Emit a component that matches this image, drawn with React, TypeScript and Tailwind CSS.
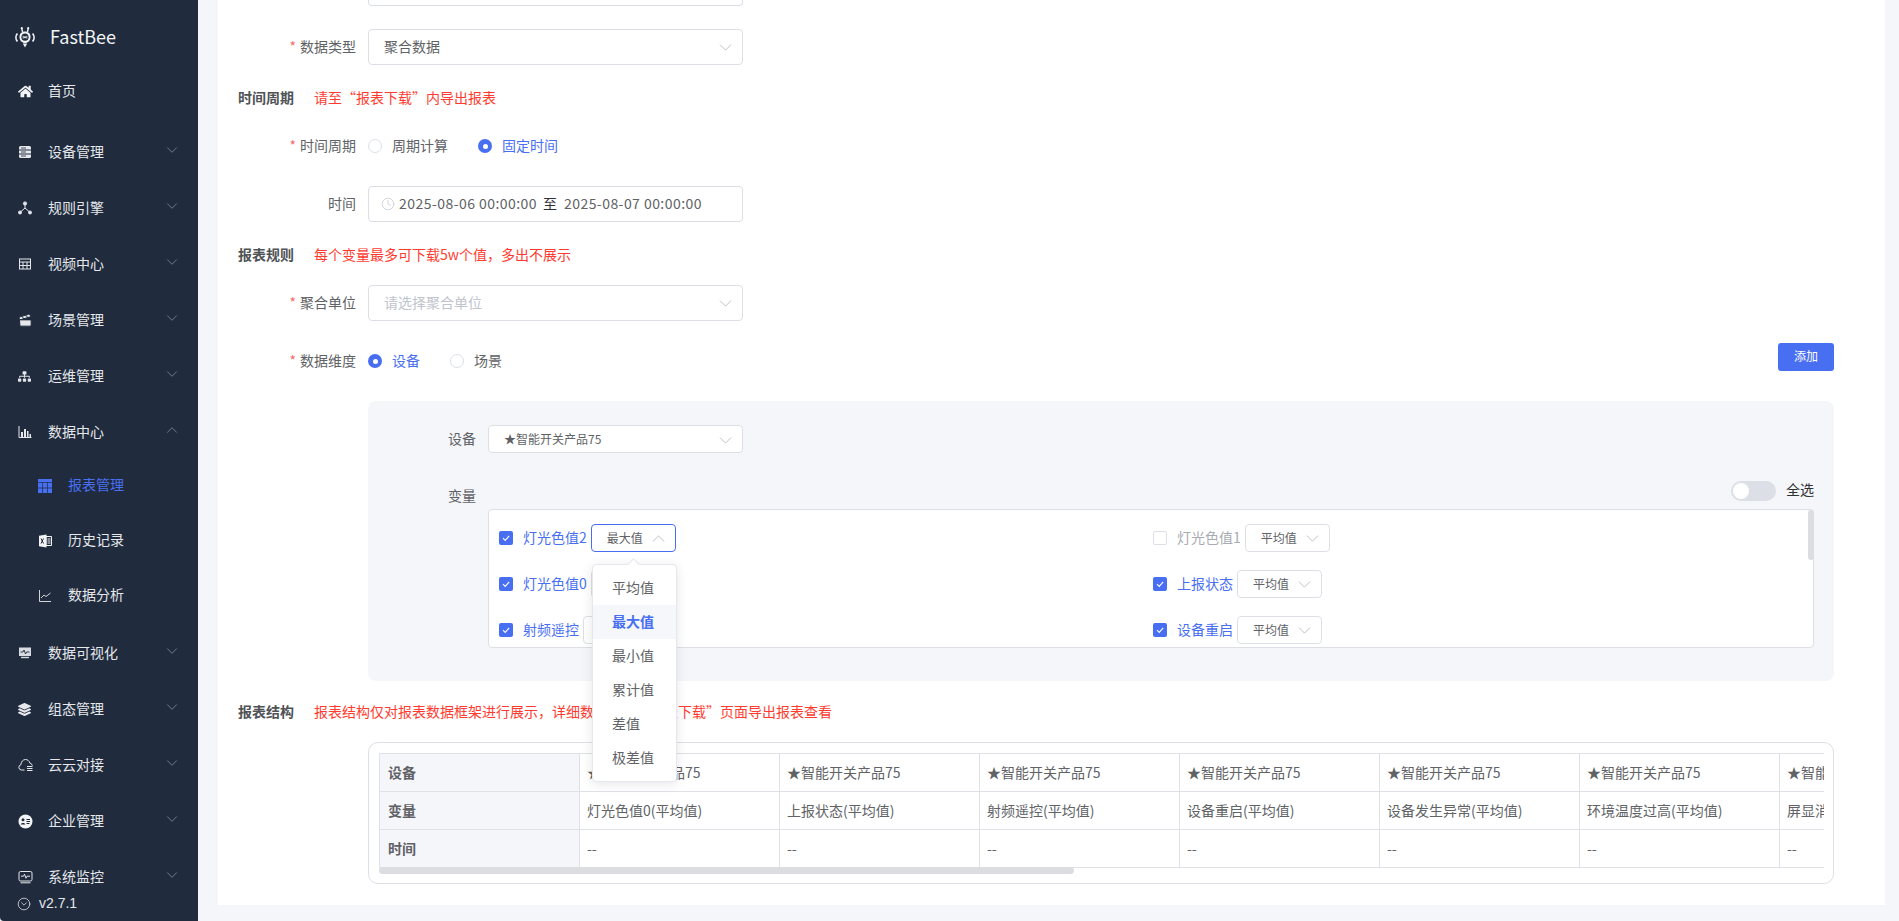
import type { ReactNode } from 'react';
import { ChevronDown, ChevronUp, CircleChevronDown, Clock, Clapperboard } from 'lucide-react';
import { FaHome, FaLayerGroup, FaSitemap } from 'react-icons/fa';

function DeviceIcon() {
  return (
    <svg width="14" height="14" viewBox="0 0 14 14" fill="none">
      <rect x="1" y="1" width="12" height="12" rx="1.5" fill="#e5e7eb" />
      <path d="M1 5h12M1 9h12" stroke="#202c3e" strokeWidth="1" />
      <path d="M3 3h5M3 7h5M3 11h5" stroke="#202c3e" strokeWidth="0.8" />
    </svg>
  );
}

function RuleIcon() {
  return (
    <svg width="14" height="14" viewBox="0 0 14 14" fill="none" stroke="#e5e7eb">
      <path d="M7 3v4M7 7l-4.5 4M7 7l4.5 4" strokeWidth="1" />
      <circle cx="7" cy="2.5" r="1.6" fill="#e5e7eb" />
      <circle cx="2" cy="11.5" r="1.5" fill="#e5e7eb" />
      <circle cx="12" cy="11.5" r="1.5" fill="#e5e7eb" />
    </svg>
  );
}

function VideoIcon() {
  return (
    <svg width="14" height="14" viewBox="0 0 14 14" fill="none" stroke="#e5e7eb" strokeWidth="1">
      <rect x="1.5" y="2" width="11" height="10" />
      <path d="M1.5 5h11M1.5 8.5h11M5 5v7M9 5v7" />
    </svg>
  );
}

function BarsIcon() {
  return (
    <svg width="14" height="14" viewBox="0 0 14 14" fill="none">
      <path d="M1 1v11.5h12.500" stroke="#e5e7eb" strokeWidth="1" />
      <path d="M3 7h2v5H3zM6 4h2v8H6zM9 6h1.500v6H9zM11.500 9H13v3h-1.500z" fill="#e5e7eb" />
    </svg>
  );
}

function ReportIcon() {
  return (
    <svg width="14" height="14" viewBox="0 0 14 14">
      <rect width="14" height="14" fill="#486ff2" />
      <path d="M0 3.500h14M0 9h14M4.500 3.500V14M9.500 3.500V14" stroke="#202c3e" strokeWidth="0.7" />
    </svg>
  );
}

function LineChartIcon() {
  return (
    <svg width="14" height="14" viewBox="0 0 14 14" fill="none" stroke="#e5e7eb" strokeWidth="0.9">
      <path d="M1.500 1v11.500H13" />
      <path d="M3 9l3-3 2 1.500L12.500 4" />
    </svg>
  );
}

function ExcelIcon() {
  return (
    <svg width="14" height="14" viewBox="0 0 14 14">
      <path d="M8 2.500h5.500v9H8z" fill="none" stroke="#f3f4f6" strokeWidth="1" />
      <path d="M9.500 5h3M9.500 7h3M9.500 9h3" stroke="#f3f4f6" strokeWidth="1" />
      <path d="M1 1.800 8.500 0.500v13L1 12.200z" fill="#f3f4f6" />
      <path d="M3 4.500l2.500 5M5.500 4.500 3 9.500" stroke="#202c3e" strokeWidth="1" />
    </svg>
  );
}

function ScreenPulseIcon() {
  return (
    <svg width="14" height="14" viewBox="0 0 14 14" fill="none">
      <path d="M1 1.500h12v8.500H1z" fill="#d8dbe0" />
      <path d="M2.500 6h2.500l1-2 1.500 4 1-2H11.500" stroke="#202c3e" strokeWidth="0.9" />
      <path d="M3 11.500h8" stroke="#d8dbe0" strokeWidth="1.400" />
    </svg>
  );
}

function CloudIcon() {
  return (
    <svg width="15" height="14" viewBox="0 0 15 14" fill="none" stroke="#e5e7eb" strokeWidth="1">
      <path d="M6.500 12H3.300a2.700 2.700 0 0 1-.4-5.300C3 3.800 5 1.500 7.500 1.500c2.200 0 3.800 1.500 4.300 3.500a3.200 3.200 0 0 1 2.500 2.500" />
      <path d="M9 8.500h5.500M9 10.500h5.500M9 12.500h5.500" />
    </svg>
  );
}

function CompanyIcon() {
  return (
    <svg width="15" height="15" viewBox="0 0 15 15">
      <circle cx="7.500" cy="7.500" r="7" fill="#f3f4f6" />
      <circle cx="5" cy="5.800" r="1.500" fill="#202c3e" />
      <path d="M2.700 10.500c.2-2 4.400-2 4.600 0z" fill="#202c3e" />
      <path d="M8.500 5.500h3.500M8.500 7.500h3.500M8.500 9.500h3" stroke="#202c3e" strokeWidth="1" />
    </svg>
  );
}

function MonitorIcon() {
  return (
    <svg width="15" height="14" viewBox="0 0 15 14" fill="none" stroke="#e5e7eb" strokeWidth="1">
      <rect x="1" y="1.500" width="13" height="9.500" rx="1.500" />
      <path d="M3 6.200h2.500l1-2 1.500 4 1-2h3" />
      <path d="M2.500 12.800h10" />
    </svg>
  );
}

function BeeLogo() {
  return (
    <svg width="20" height="21" viewBox="0 0 20 21" fill="none">
      <path d="M7.500 5 6.800 1.500M12.500 5l.7-3.500" stroke="#f3f4f6" strokeWidth="1.400" />
      <circle cx="6.800" cy="1.200" r="1.100" fill="#f3f4f6" />
      <circle cx="13.200" cy="1.200" r="1.100" fill="#f3f4f6" />
      <path d="M10 4.500c3.500 0 5.500 2.300 5.500 5.500 0 3.800-2.600 6-5.500 6s-5.500-2.200-5.500-6c0-3.200 2-5.500 5.500-5.500z" fill="#f3f4f6" />
      <circle cx="10" cy="10.200" r="3.600" fill="#202c3e" />
      <path d="M8.200 8.800v2.800M11.800 8.800v2.800" stroke="#f3f4f6" strokeWidth="0.900" />
      <circle cx="10" cy="10.200" r="1" fill="#f3f4f6" />
      <path d="M2.400 6.500c-1.900 2.300-1.900 5.700 0 8M17.600 6.500c1.900 2.300 1.900 5.700 0 8" stroke="#f3f4f6" strokeWidth="1.700" />
      <path d="M7.800 16.500h4.400L10 20.500z" fill="#f3f4f6" />
    </svg>
  );
}

type MenuEntry = {
  label: string;
  icon: ReactNode;
  arrow?: 'down' | 'up';
};

const menuTop: MenuEntry[] = [
  { label: '设备管理', icon: <DeviceIcon />, arrow: 'down' },
  { label: '规则引擎', icon: <RuleIcon />, arrow: 'down' },
  { label: '视频中心', icon: <VideoIcon />, arrow: 'down' },
  { label: '场景管理', icon: <Clapperboard size={15} color="#202c3e" fill="#e5e7eb" strokeWidth={1.5} />, arrow: 'down' },
  { label: '运维管理', icon: <FaSitemap size={13} color="#e5e7eb" />, arrow: 'down' },
  { label: '数据中心', icon: <BarsIcon />, arrow: 'up' },
];

const menuBottom: MenuEntry[] = [
  { label: '数据可视化', icon: <ScreenPulseIcon />, arrow: 'down' },
  { label: '组态管理', icon: <FaLayerGroup size={13} color="#e5e7eb" />, arrow: 'down' },
  { label: '云云对接', icon: <CloudIcon />, arrow: 'down' },
  { label: '企业管理', icon: <CompanyIcon />, arrow: 'down' },
  { label: '系统监控', icon: <MonitorIcon />, arrow: 'down' },
];

function MenuRow({ label, icon, arrow }: MenuEntry) {
  return (
    <div className="flex h-[56px] items-center pl-[18px] pr-[17px] text-[14px] text-[#e5e7eb]">
      <span className="flex w-[30px] shrink-0 items-center">{icon}</span>
      <span className="flex-1 pb-[2px]">{label}</span>
      {arrow === 'down' && <ChevronDown size={18} strokeWidth={1} color="#8a919c" className="mb-[5px]" />}
      {arrow === 'up' && <ChevronUp size={18} strokeWidth={1} color="#8a919c" className="mb-[4px]" />}
    </div>
  );
}

function SubRow({ label, icon, active }: { label: string; icon: ReactNode; active?: boolean }) {
  return (
    <div className={`flex h-[55px] items-center pl-[38px] text-[14px] ${active ? 'text-[#486ff2]' : 'text-[#e5e7eb]'}`}>
      <span className="flex w-[30px] shrink-0 items-center">{icon}</span>
      <span className="pb-[2px]">{label}</span>
    </div>
  );
}

function Sidebar() {
  return (
    <aside className="relative h-full w-[198px] shrink-0 overflow-hidden rounded-bl-[4px] bg-[#202c3e]">
      <div className="flex h-[63px] items-center pl-[15px] pt-[12px]">
        <BeeLogo />
        <span className="ml-[15px] pb-[2px] text-[18px] text-[#f3f4f6]">FastBee</span>
      </div>
      <div className="flex h-[61px] items-start">
        <div className="w-full">
          <MenuRow label="首页" icon={<FaHome size={15} color="#f3f4f6" />} />
        </div>
      </div>
      {menuTop.map((entry) => (
        <MenuRow key={entry.label} {...entry} />
      ))}
      <div className="-mt-[2px] mb-[2px]">
        <SubRow label="报表管理" icon={<ReportIcon />} active />
        <SubRow label="历史记录" icon={<ExcelIcon />} />
        <SubRow label="数据分析" icon={<LineChartIcon />} />
      </div>
      {menuBottom.map((entry) => (
        <MenuRow key={entry.label} {...entry} />
      ))}
      <div className="absolute bottom-[7px] left-[17px] flex items-center gap-[8px] text-[14px] font-medium text-[#e5e7eb]">
        <CircleChevronDown size={14} strokeWidth={1.3} />
        <span className="font-['Liberation_Sans',sans-serif]">v2.7.1</span>
      </div>
    </aside>
  );
}

function FormLabel({ text, required }: { text: string; required?: boolean }) {
  return (
    <div className="mr-[12px] w-[118px] shrink-0 pb-[2px] text-right text-[14px] text-[#606266]">
      {required && <span className="mr-[4px] text-[#f56c6c]">*</span>}
      {text}
    </div>
  );
}

function Radio({ label, checked, className }: { label: string; checked?: boolean; className?: string }) {
  return (
    <div className={`flex items-center ${className ?? ''}`}>
      {checked ? (
        <span className="flex h-[14px] w-[14px] items-center justify-center rounded-full bg-[#486ff2]">
          <span className="h-[5px] w-[5px] rounded-full bg-white" />
        </span>
      ) : (
        <span className="h-[14px] w-[14px] rounded-full border border-[#dcdfe6] bg-white" />
      )}
      <span className={`ml-[10px] pb-[2px] text-[14px] ${checked ? 'text-[#486ff2]' : 'text-[#606266]'}`}>{label}</span>
    </div>
  );
}

function BigSelect({ value, placeholder }: { value?: string; placeholder?: string }) {
  return (
    <div className="flex h-[36px] w-[375px] items-center justify-between rounded-[4px] border border-[#dcdfe6] bg-white pl-[15px] pr-[6px] text-[14px]">
      <span className={`pb-[2px] ${value ? 'text-[#606266]' : 'text-[#c0c4cc]'}`}>{value ?? placeholder}</span>
      <ChevronDown size={21} strokeWidth={1} color="#b4b8bf" />
    </div>
  );
}

function SectionTitle({ title, hint }: { title: string; hint: string }) {
  return (
    <div className="flex h-[20px] items-center pb-[2px] text-[14px]">
      <span className="w-[76px] shrink-0 font-bold text-[#505356]">{title}</span>
      <span className="text-[#ff3b30]">{hint}</span>
    </div>
  );
}

function Check({ checked }: { checked: boolean }) {
  if (!checked) {
    return <span className="h-[14px] w-[14px] shrink-0 rounded-[2px] border border-[#dcdfe6] bg-white" />;
  }
  return (
    <span className="flex h-[14px] w-[14px] shrink-0 items-center justify-center rounded-[2px] bg-[#486ff2]">
      <svg width="10" height="10" viewBox="0 0 10 10" fill="none" stroke="#fff" strokeWidth="1.100">
        <path d="M2 5.200 4.200 7.400 8.200 2.800" />
      </svg>
    </span>
  );
}

function MiniSelect({ value, open }: { value: string; open?: boolean }) {
  return (
    <div
      className={`ml-[4px] flex h-[28px] w-[85px] shrink-0 items-center justify-between rounded-[4px] border bg-white pl-[15px] pr-[6px] text-[12px] text-[#606266] ${open ? 'border-[#486ff2]' : 'border-[#dcdfe6]'}`}
    >
      <span className="pb-[1px]">{value}</span>
      {open ? <ChevronUp size={21} strokeWidth={1} color="#b4b8bf" /> : <ChevronDown size={21} strokeWidth={1} color="#b4b8bf" />}
    </div>
  );
}

type Variable = {
  name: string;
  checked: boolean;
  open?: boolean;
  value: string;
};

const variables: Variable[] = [
  { name: '灯光色值2', checked: true, open: true, value: '最大值' },
  { name: '灯光色值1', checked: false, value: '平均值' },
  { name: '灯光色值0', checked: true, value: '平均值' },
  { name: '上报状态', checked: true, value: '平均值' },
  { name: '射频遥控', checked: true, value: '平均值' },
  { name: '设备重启', checked: true, value: '平均值' },
];

function VariableItem({ name, checked, open, value }: Variable) {
  return (
    <div className="flex h-[28px] items-center">
      <Check checked={checked} />
      <span className={`ml-[10px] whitespace-nowrap pb-[2px] text-[14px] ${checked ? 'text-[#486ff2]' : 'text-[#a8abb2]'}`}>{name}</span>
      <MiniSelect value={value} open={open} />
    </div>
  );
}

const dropdownOptions = ['平均值', '最大值', '最小值', '累计值', '差值', '极差值'];

function OptionsDropdown() {
  return (
    <div className="absolute left-[104px] top-[55px] z-10 w-[85px] rounded-[4px] border border-[#e4e7ed] bg-white py-[6px] text-[14px] text-[#606266] shadow-[0_2px_12px_rgba(0,0,0,0.1)]">
      <span className="absolute -top-[5px] left-[36px] h-[9px] w-[9px] rotate-45 border-l border-t border-[#e4e7ed] bg-white" />
      {dropdownOptions.map((option) => (
        <div
          key={option}
          className={`relative flex h-[34px] items-center pb-[2px] pl-[19px] ${option === '最大值' ? 'bg-[#f5f7fa] font-bold text-[#486ff2]' : ''}`}
        >
          {option}
        </div>
      ))}
    </div>
  );
}

const deviceName = '★智能开关产品75';
const tableVariables = [
  '灯光色值0(平均值)',
  '上报状态(平均值)',
  '射频遥控(平均值)',
  '设备重启(平均值)',
  '设备发生异常(平均值)',
  '环境温度过高(平均值)',
  '屏显消息(平均值)',
];

function StructureTable() {
  const headCell = 'h-[38px] w-[200px] border border-[#dfe1e6] bg-[#f5f6fa] pl-[8px] text-left font-bold text-[#606266]';
  const cell = 'h-[38px] w-[200px] whitespace-nowrap border border-[#dfe1e6] pl-[7px] text-left font-normal text-[#606266]';
  return (
    <div className="relative h-[121px] w-[1445px] overflow-hidden">
      <table className="w-[1600px] table-fixed border-collapse text-[14px]">
        <tbody>
          <tr>
            <th className={headCell}>设备</th>
            {tableVariables.map((name) => (
              <td key={name} className={cell}>
                {deviceName}
              </td>
            ))}
          </tr>
          <tr>
            <th className={headCell}>变量</th>
            {tableVariables.map((name) => (
              <td key={name} className={cell}>
                {name}
              </td>
            ))}
          </tr>
          <tr>
            <th className={headCell}>时间</th>
            {tableVariables.map((name) => (
              <td key={name} className={cell}>
                --
              </td>
            ))}
          </tr>
        </tbody>
      </table>
      <div className="mt-[-1px] h-[7px] w-[695px] rounded-[4px] bg-[#dcdde0]" />
    </div>
  );
}

function ReportForm() {
  return (
    <div className="mb-[16px] ml-[20px] flex-1 bg-white pl-[20px] pr-[51px]">
      <div className="ml-[130px] h-[6px] w-[375px] rounded-b-[4px] border-x border-b border-[#dcdfe6]" />

      <div className="mt-[23px] flex items-center">
        <FormLabel text="数据类型" required />
        <BigSelect value="聚合数据" />
      </div>

      <div className="mt-[23px]">
        <SectionTitle title="时间周期" hint="请至“报表下载”内导出报表" />
      </div>

      <div className="mt-[28px] flex h-[20px] items-center">
        <FormLabel text="时间周期" required />
        <Radio label="周期计算" />
        <Radio label="固定时间" checked className="ml-[30px]" />
      </div>

      <div className="mt-[30px] flex items-center">
        <FormLabel text="时间" />
        <div className="flex h-[36px] w-[375px] items-center rounded-[4px] border border-[#dcdfe6] bg-white pl-[12px] text-[14px] text-[#606266]">
          <Clock size={14} strokeWidth={1.2} color="#c0c4cc" />
          <span className="ml-[4px] pb-[2px] tracking-[0.45px]">2025-08-06 00:00:00</span>
          <span className="ml-[6px] pb-[2px] text-[#303133]">至</span>
          <span className="ml-[7px] pb-[2px] tracking-[0.45px]">2025-08-07 00:00:00</span>
        </div>
      </div>

      <div className="mt-[23px]">
        <SectionTitle title="报表规则" hint="每个变量最多可下载5w个值，多出不展示" />
      </div>

      <div className="mt-[20px] flex items-center">
        <FormLabel text="聚合单位" required />
        <BigSelect placeholder="请选择聚合单位" />
      </div>

      <div className="mt-[22px] flex h-[36px] items-center">
        <FormLabel text="数据维度" required />
        <Radio label="设备" checked />
        <Radio label="场景" className="ml-[30px]" />
        <button
          type="button"
          className="mb-auto ml-auto h-[28px] w-[56px] rounded-[3px] bg-[#486ff2] pb-[2px] text-[12px] text-white"
        >
          添加
        </button>
      </div>

      <div className="ml-[130px] mt-[22px] h-[280px] rounded-[8px] bg-[#f5f6fa] pr-[20px] pt-[24px]">
        <div className="flex items-center pl-[80px]">
          <span className="mr-[12px] pb-[2px] text-[14px] text-[#606266]">设备</span>
          <div className="flex h-[28px] w-[255px] items-center justify-between rounded-[4px] border border-[#dcdfe6] bg-white pl-[15px] pr-[6px] text-[12px] text-[#606266]">
            <span className="pb-[1px]">{deviceName}</span>
            <ChevronDown size={21} strokeWidth={1} color="#b4b8bf" className="mt-[3px]" />
          </div>
        </div>

        <div className="mt-[26px] flex h-[30px] items-start pl-[80px]">
          <span className="pt-[6px] text-[14px] text-[#606266]">变量</span>
          <div className="ml-auto flex items-center">
            <span className="flex h-[20px] w-[45px] items-center rounded-full bg-[#dcdfe6] pl-[2px]">
              <span className="h-[16px] w-[16px] rounded-full bg-white" />
            </span>
            <span className="ml-[10px] w-[28px] pb-[2px] text-[14px] text-[#303133]">全选</span>
          </div>
        </div>

        <div className="relative ml-[120px] h-[139px]">
          <div className="h-full overflow-hidden rounded-[4px] border border-[#dcdfe6] bg-white pl-[10px] pt-[14px]">
            <div className="grid grid-cols-[654px_1fr] gap-y-[18px]">
              {variables.map((variable) => (
                <VariableItem key={variable.name} {...variable} />
              ))}
            </div>
          </div>
          <div className="absolute right-0 top-[1px] h-[50px] w-[6px] rounded-[3px] bg-[#dcdde0]" />
          <OptionsDropdown />
        </div>
      </div>

      <div className="mt-[21px]">
        <SectionTitle title="报表结构" hint="报表结构仅对报表数据框架进行展示，详细数据请至“报表下载”页面导出报表查看" />
      </div>

      <div className="ml-[130px] mt-[20px] h-[142px] rounded-[10px] border border-[#dcdfe6] pl-[10px] pt-[10px]">
        <StructureTable />
      </div>
    </div>
  );
}

export default function App() {
  return (
    <div className="flex h-[921px] w-[1899px] overflow-hidden bg-[#f5f6fa] pr-[14px] font-['Noto_Sans_CJK_SC','Liberation_Sans',sans-serif]">
      <Sidebar />
      <ReportForm />
    </div>
  );
}
